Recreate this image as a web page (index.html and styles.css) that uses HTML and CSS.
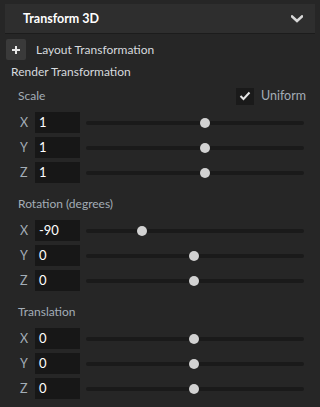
FILE: index.html
```html
<!DOCTYPE html>
<html>
<head>
<meta charset="utf-8">
<link rel="stylesheet" href="styles.css">
</head>
<body>
<div class="panel">
  <div class="header">
    <span class="header-title">Transform 3D</span>
    <svg class="chevron" width="12" height="8" viewBox="0 0 12 8"><path d="M1 1.5 L6 6 L11 1.5" fill="none" stroke="#d8d8d8" stroke-width="2.6" stroke-linecap="square"/></svg>
  </div>
  <div class="layout-row">
    <span class="plus-btn"><svg width="10" height="10" viewBox="0 0 10 10"><path d="M5 1 V9 M1 5 H9" stroke="#e8e8e8" stroke-width="2"/></svg></span>
    <span class="layout-label">Layout Transformation</span>
  </div>
  <div class="render-title">Render Transformation</div>

  <div class="group">
    <div class="group-title">
      <span>Scale</span>
      <span class="uniform">
        <span class="checkbox"><svg width="12" height="10" viewBox="0 0 12 10"><path d="M1.5 5 L4.5 8 L10.5 1.5" fill="none" stroke="#e6e6e6" stroke-width="2"/></svg></span>
        <span class="uniform-label">Uniform</span>
      </span>
    </div>
    <div class="row"><span class="axis">X</span><span class="input">1</span><span class="track"><span class="thumb" style="left:54.6%"></span></span></div>
    <div class="row"><span class="axis">Y</span><span class="input">1</span><span class="track"><span class="thumb" style="left:54.6%"></span></span></div>
    <div class="row"><span class="axis">Z</span><span class="input">1</span><span class="track"><span class="thumb" style="left:54.6%"></span></span></div>
  </div>

  <div class="group">
    <div class="group-title"><span>Rotation (degrees)</span></div>
    <div class="row"><span class="axis">X</span><span class="input">-90</span><span class="track"><span class="thumb" style="left:25.7%"></span></span></div>
    <div class="row"><span class="axis">Y</span><span class="input">0</span><span class="track"><span class="thumb" style="left:49.5%"></span></span></div>
    <div class="row"><span class="axis">Z</span><span class="input">0</span><span class="track"><span class="thumb" style="left:49.5%"></span></span></div>
  </div>

  <div class="group">
    <div class="group-title"><span>Translation</span></div>
    <div class="row"><span class="axis">X</span><span class="input">0</span><span class="track"><span class="thumb" style="left:49.5%"></span></span></div>
    <div class="row"><span class="axis">Y</span><span class="input">0</span><span class="track"><span class="thumb" style="left:49.5%"></span></span></div>
    <div class="row"><span class="axis">Z</span><span class="input">0</span><span class="track"><span class="thumb" style="left:49.5%"></span></span></div>
  </div>
</div>
</body>
</html>
```
FILE: styles.css
```css
html, body {
  margin: 0;
  padding: 0;
  background: #262626;
  height: 100%;
}
body {
  font-family: "Lato", "Noto Sans", sans-serif;
  font-size: 12px;
  color: #d6dade;
}
.panel {
  padding: 4px 0 0 0;
}
.header {
  margin: 0 5px;
  height: 29px;
  background: #2e2e2e;
  border-bottom: 1px solid #1c1c1c;
  display: flex;
  align-items: center;
  justify-content: space-between;
  padding: 0 12px 0 18px;
}
.header-title {
  font-weight: bold;
  font-size: 12.5px;
  color: #ffffff;
}
.chevron {
  display: block;
  margin-top: 1px;
}
.layout-row {
  margin-top: 5px;
  padding-left: 6px;
  display: flex;
  align-items: center;
  gap: 10px;
  height: 21px;
}
.plus-btn {
  width: 20px;
  height: 21px;
  background: #3a3a3a;
  border-radius: 2px;
  display: flex;
  align-items: center;
  justify-content: center;
}
.plus-btn svg { display: block; }
.layout-label {
  color: #d6dade;
}
.render-title {
  margin-top: 4px;
  padding-left: 11px;
  height: 16px;
  line-height: 16px;
  color: #d6dade;
}
.group {
  padding-left: 18px;
  padding-right: 16px;
  margin-top: 8px;
}
.group + .group {
  margin-top: 13px;
}
.group-title {
  height: 16px;
  line-height: 16px;
  display: flex;
  align-items: center;
  justify-content: space-between;
  color: #a3adb7;
  margin-bottom: 8px;
}
.uniform {
  display: flex;
  align-items: center;
  gap: 7px;
  margin-right: -2px;
}
.checkbox {
  width: 18px;
  height: 17px;
  background: #1a1a1a;
  display: flex;
  align-items: center;
  justify-content: center;
}
.checkbox svg { display: block; }
.uniform-label {
  color: #a3adb7;
  font-size: 12.5px;
}
.row {
  display: flex;
  align-items: center;
  height: 21px;
  margin-bottom: 4px;
}
.axis {
  width: 17px;
  padding-left: 2px;
  box-sizing: border-box;
  color: #a3adb7;
  font-size: 12.5px;
}
.input {
  width: 45px;
  height: 21px;
  line-height: 21px;
  background: #171717;
  color: #ffffff;
  padding-left: 4px;
  box-sizing: border-box;
  font-size: 13px;
}
.track {
  position: relative;
  flex: 1;
  margin-left: 6px;
  height: 4px;
  border-radius: 2px;
  background: #1a1a1a;
}
.thumb {
  position: absolute;
  top: 50%;
  width: 10px;
  height: 10px;
  border-radius: 50%;
  background: #d2d2d2;
  transform: translate(-50%, -50%);
}
```
